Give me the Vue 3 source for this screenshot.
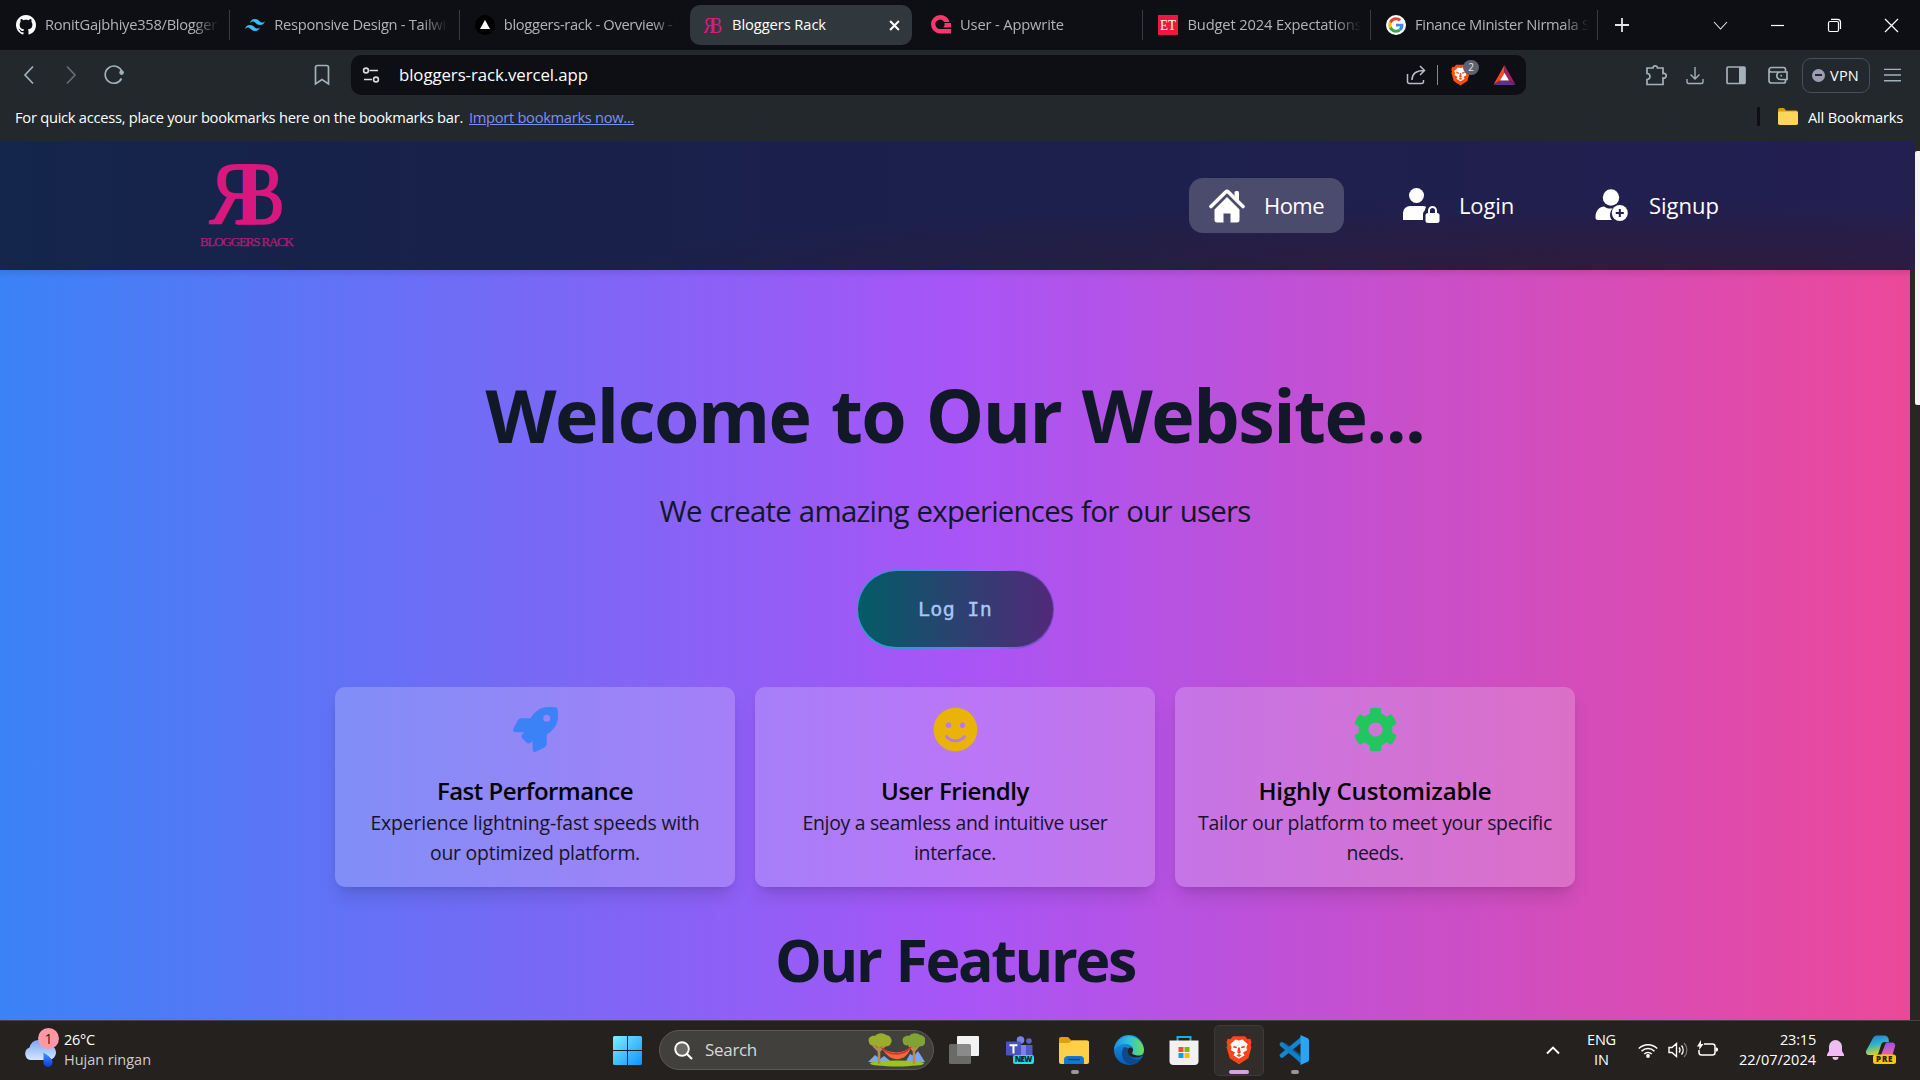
<script setup>
// Tunes letter spacing so a label fills the width it was designed for.
const vFit = {
  mounted(el, { value }) {
    const n = el.textContent.trim().length
    const w = el.getBoundingClientRect().width
    if (n > 1) el.style.letterSpacing = ((value - w) / n).toFixed(3) + 'px'
  }
}

const tabs = [
  { id: 'github', title: 'RonitGajbhiye358/Bloggers-Rack', w: 229.3, fit: 214, sep: true },
  { id: 'tailwind', title: 'Responsive Design - Tailwind CSS', w: 229.5, fit: 217, sep: true },
  { id: 'vercel', title: 'bloggers-rack - Overview - Vercel', w: 229.2, fit: 212 },
  { id: 'rb', title: 'Bloggers Rack', w: 227, fit: 94, active: true },
  { id: 'appwrite', title: 'User - Appwrite', w: 227.5, fit: 104, sep: true },
  { id: 'et', title: 'Budget 2024 Expectations Live', w: 227.5, fit: 204, sep: true },
  { id: 'google', title: 'Finance Minister Nirmala Sitharaman', w: 227.5, fit: 243, sep: true }
]

const cards = [
  {
    title: 'Fast Performance', tw: 196, color: '#3b82f6', vb: '0 0 512 512',
    lines: [['Experience lightning-fast speeds with', 329], ['our optimized platform.', 210]],
    d: 'M505.12 19.09c-1.19-5.53-6.66-11-12.21-12.19C460.72 0 435.51 0 410.41 0 307.18 0 245.27 55.2 199.05 128H94.84c-16.35.02-35.56 11.88-42.89 26.48L2.52 253.3A28.4 28.4 0 0 0 0 264a24 24 0 0 0 24 24h103.82l-22.48 22.47c-11.37 11.36-13 32.26 0 45.25l50.9 50.9c11.16 11.19 32.16 13.16 45.28 0L224 384.16V488a24 24 0 0 0 24 24 28.56 28.56 0 0 0 10.71-2.52l98.73-49.39c14.63-7.3 26.51-26.5 26.51-42.86V312.8c72.6-46.31 128.03-108.41 128.03-211.1.1-25.2.1-50.4-6.86-82.61zM384.04 168A40 40 0 1 1 424.05 128a40 40 0 0 1-40.01 40z'
  },
  {
    title: 'User Friendly', tw: 148, color: '#eab308', vb: '0 0 496 512',
    lines: [['Enjoy a seamless and intuitive user', 305], ['interface.', 82]],
    d: 'M248 8C111 8 0 119 0 256s111 248 248 248 248-111 248-248S385 8 248 8zm80 168c17.7 0 32 14.3 32 32s-14.3 32-32 32-32-14.3-32-32 14.3-32 32-32zm-160 0c17.7 0 32 14.3 32 32s-14.3 32-32 32-32-14.3-32-32 14.3-32 32-32zm194.8 170.2C334.3 380.4 292.5 400 248 400s-86.3-19.6-114.8-53.8c-13.6-16.3 11-36.7 24.6-20.5 22.4 26.9 55.2 42.2 90.2 42.2s67.8-15.4 90.2-42.2c13.4-16.2 38.1 4.2 24.6 20.5z'
  },
  {
    title: 'Highly Customizable', tw: 233, color: '#22c55e', vb: '0 0 512 512',
    lines: [['Tailor our platform to meet your specific', 354], ['needs.', 57]],
    d: 'M487.4 315.7l-42.6-24.6c4.3-23.2 4.3-47 0-70.2l42.6-24.6c4.9-2.8 7.1-8.6 5.5-14-11.1-35.6-30-67.8-54.7-94.6-3.8-4.1-10-5.1-14.8-2.3L380.8 110c-17.9-15.4-38.5-27.3-60.8-35.1V25.8c0-5.6-3.9-10.5-9.4-11.7-36.7-8.2-74.3-7.8-109.2 0-5.5 1.2-9.4 6.1-9.4 11.7V75c-22.2 7.9-42.8 19.8-60.8 35.1L88.7 85.5c-4.9-2.8-11-1.9-14.8 2.3-24.7 26.7-43.6 58.9-54.7 94.6-1.7 5.4.6 11.2 5.5 14L67.3 221c-4.3 23.2-4.3 47 0 70.2l-42.6 24.6c-4.9 2.8-7.1 8.6-5.5 14 11.1 35.6 30 67.8 54.7 94.6 3.8 4.1 10 5.1 14.8 2.3l42.6-24.6c17.9 15.4 38.5 27.3 60.8 35.1v49.2c0 5.6 3.9 10.5 9.4 11.7 36.7 8.2 74.3 7.8 109.2 0 5.5-1.2 9.4-6.1 9.4-11.7v-49.2c22.2-7.9 42.8-19.8 60.8-35.1l42.6 24.6c4.9 2.8 11 1.9 14.8-2.3 24.7-26.7 43.6-58.9 54.7-94.6 1.5-5.5-.7-11.3-5.6-14.1zM256 336c-44.1 0-80-35.9-80-80s35.9-80 80-80 80 35.9 80 80-35.9 80-80 80z'
  }
]
</script>

<template>
  <div class="screen">
    <!-- Browser tabs -->
    <header class="tabstrip">
      <div v-for="t in tabs" :key="t.id" class="tab" :class="{ active: t.active, sep: t.sep }" :style="{ width: t.w + 'px' }">
        <svg v-if="t.id === 'github'" class="fav" viewBox="0 0 16 16"><path fill="#fff" d="M8 0C3.58 0 0 3.58 0 8c0 3.54 2.29 6.53 5.47 7.59.4.07.55-.17.55-.38 0-.19-.01-.82-.01-1.49-2.01.37-2.53-.49-2.69-.94-.09-.23-.48-.94-.82-1.13-.28-.15-.68-.52-.01-.53.63-.01 1.08.58 1.23.82.72 1.21 1.87.87 2.33.66.07-.52.28-.87.51-1.07-1.78-.2-3.64-.89-3.64-3.95 0-.87.31-1.59.82-2.15-.08-.2-.36-1.02.08-2.12 0 0 .67-.21 2.2.82.64-.18 1.32-.27 2-.27.68 0 1.36.09 2 .27 1.53-1.04 2.2-.82 2.2-.82.44 1.1.16 1.92.08 2.12.51.56.82 1.27.82 2.15 0 3.07-1.87 3.75-3.65 3.95.29.25.54.73.54 1.48 0 1.07-.01 1.93-.01 2.2 0 .21.15.46.55.38A8.01 8.01 0 0 0 16 8c0-4.42-3.58-8-8-8z"/></svg>
        <svg v-else-if="t.id === 'tailwind'" class="fav" viewBox="0 0 24 24"><path fill="#38bdf8" d="M12 4.8c-3.2 0-5.2 1.6-6 4.8 1.2-1.6 2.6-2.2 4.2-1.8.913.228 1.565.89 2.288 1.624C13.666 10.618 15.027 12 18 12c3.2 0 5.2-1.6 6-4.8-1.2 1.6-2.6 2.2-4.2 1.8-.913-.228-1.565-.89-2.288-1.624C16.337 6.182 14.976 4.8 12 4.8zM6 12c-3.2 0-5.2 1.6-6 4.8 1.2-1.6 2.6-2.2 4.2-1.8.913.228 1.565.89 2.288 1.624C7.666 17.818 9.027 19.2 12 19.2c3.2 0 5.2-1.6 6-4.8-1.2 1.6-2.6 2.2-4.2 1.8-.913-.228-1.565-.89-2.288-1.624C10.337 13.382 8.976 12 6 12z"/></svg>
        <svg v-else-if="t.id === 'vercel'" class="fav" viewBox="0 0 20 20"><circle cx="10" cy="10" r="10" fill="#000"/><path d="M10 5l5 9H5z" fill="#fff"/></svg>
        <svg v-else-if="t.id === 'rb'" class="fav" viewBox="0 0 20 20"><g fill="#d81b84" font-family="Liberation Serif, serif" font-size="24"><text transform="translate(10.8 18) scale(-.72 1)">R</text><text transform="translate(6.4 18) scale(.72 1)">B</text></g></svg>
        <svg v-else-if="t.id === 'appwrite'" class="fav" viewBox="0 0 20 20"><path fill="#fd366e" d="M20 14v4.6H9.3A9.3 9.3 0 0 1 9.3 0c4.6 0 8.2 2.9 9.2 7h-5.3a4.7 4.7 0 1 0-3.7 7H20z"/><path fill="#fd366e" d="M13.5 8H20v4.6h-7.6a4.6 4.6 0 0 0 1.1-4.6z"/></svg>
        <svg v-else-if="t.id === 'et'" class="fav" viewBox="0 0 20 20"><path fill="#ed193b" d="M0 0h20v20H0z"/><text x="2" y="15" textLength="16" lengthAdjust="spacingAndGlyphs" fill="#fff" font-family="Liberation Serif, serif" font-size="15">ET</text></svg>
        <svg v-else class="fav" viewBox="-7 -7 62 62"><circle cx="24" cy="24" r="31" fill="#fff"/><path fill="#EA4335" d="M24 9.5c3.54 0 6.71 1.22 9.21 3.6l6.85-6.85C35.9 2.38 30.47 0 24 0 14.62 0 6.51 5.38 2.56 13.22l7.98 6.19C12.43 13.72 17.74 9.5 24 9.5z"/><path fill="#4285F4" d="M46.98 24.55c0-1.57-.15-3.09-.38-4.55H24v9.02h12.94c-.58 2.96-2.26 5.48-4.78 7.18l7.73 6c4.51-4.18 7.09-10.36 7.09-17.65z"/><path fill="#FBBC05" d="M10.53 28.59c-.48-1.45-.76-2.99-.76-4.59s.27-3.14.76-4.59l-7.98-6.19C.92 16.46 0 20.12 0 24s.92 7.54 2.56 10.78l7.97-6.19z"/><path fill="#34A853" d="M24 48c6.48 0 11.93-2.13 15.89-5.81l-7.73-6c-2.15 1.45-4.92 2.3-8.16 2.3-6.26 0-11.57-4.22-13.47-9.91l-7.98 6.19C6.51 42.62 14.62 48 24 48z"/></svg>
        <div class="tabtitle"><span v-fit="t.fit">{{ t.title }}</span></div>
        <svg v-if="t.active" class="close" viewBox="0 0 10 10"><path d="M1 1l8 8M9 1L1 9" stroke="#fff" stroke-width="1.9"/></svg>
      </div>
      <svg class="plus" viewBox="0 0 14 14"><path d="M7 0v14M0 7h14" stroke="#e4e5e8" stroke-width="1.8"/></svg>
      <div class="winctl">
        <svg viewBox="0 0 15 15"><path d="M1 4l6.500 7L14 4" stroke="#e8e8e8" fill="none" stroke-width="1.1"/></svg>
        <svg viewBox="0 0 15 15"><path d="M1 7.500h13" stroke="#fff" stroke-width="1.2"/></svg>
        <svg viewBox="0 0 15 15"><rect x="1.500" y="3.500" width="10" height="10" rx="1.5" fill="none" stroke="#fff" stroke-width="1.2"/><path d="M4 1.300h6.500a3 3 0 0 1 3 3V11" fill="none" stroke="#fff" stroke-width="1.2"/></svg>
        <svg viewBox="0 0 15 15"><path d="M1 1l13 13M14 1L1 14" stroke="#fff" stroke-width="1.2"/></svg>
      </div>
    </header>

    <!-- Address bar -->
    <div class="toolbar">
      <svg class="i22 back" viewBox="0 0 22 22"><path d="M15 2.5L7 11l8 8.500" class="ln"/></svg>
      <svg class="i22 fwd" viewBox="0 0 22 22"><path d="M7 2.5l8 8.5-8 8.500" class="ln"/></svg>
      <svg class="i22 reload" viewBox="0 0 22 22"><path d="M18.5 14.5A8.600 8.600 0 1 1 19 8" class="ln"/><circle cx="18.6" cy="8.6" r="2.3" fill="#a3b2b8"/></svg>
      <svg class="i22 mark" viewBox="0 0 22 22"><path d="M4.5 3.5a2 2 0 0 1 2-2h9a2 2 0 0 1 2 2v16.500L11 15.500 4.500 20z" class="ln"/></svg>
      <div class="url">
        <svg class="site" viewBox="0 0 18 18"><g fill="none" stroke="#d8dce0" stroke-width="1.6"><circle cx="4" cy="4.5" r="2.4"/><path d="M7.5 4.5H16M2 13.5h8"/><circle cx="14" cy="13.5" r="2.4"/></g></svg>
        <span v-fit="189" class="addr">bloggers-rack.vercel.app</span>
        <svg class="share" viewBox="0 0 20 20"><path d="M1.5 9v7.500a2 2 0 0 0 2 2h12a2 2 0 0 0 2-2V15M6 15c0-6 4-9.500 12-9.500M14 1l4.500 4.500L14 10" fill="none" stroke="#b9bcc2" stroke-width="1.5"/></svg>
        <i class="bar"></i>
        <div class="shield">
          <svg viewBox="0 0 30 34"><path fill="#ff4d0c" d="M8 1h14l3 3.500 3-.5 1.500 4-1 3 .8 3-3.500 12.500L15 33.500 4.200 26.500.7 14l.8-3-1-3L2 4l3 .5z"/><path fill="#fff" d="M15 6l4-1 6 5.500-1.500 4 1 2.500-5 3 2 3L15 27l-6.500-4 2-3-5-3 1-2.500L5 10.500 11 5z"/><path fill="#ff4d0c" d="M9 12l4 1.500L12 15l-4-1zM21 12l-4 1.500 1 1.500 4-1zM14 14h2l1 6-2 1.500-2-1.500zM12 23l3-1.500 3 1.500-3 2z"/></svg>
          <b>2</b>
        </div>
        <svg class="bat" viewBox="0 0 24 22"><path fill="#ff4724" d="M12 0L0 21.500 7 17l5-8.500z"/><path fill="#9e1f63" d="M12 0l12 21.500L17 17 12 8.500z"/><path fill="#662d91" d="M0 22h24l-7-5H7z"/><path fill="#fff" d="M12 8.500L7 17h10z"/></svg>
      </div>
      <svg class="i22 ext" viewBox="0 0 22 22"><path d="M2 4h6a2.200 2.200 0 1 1 4.400 0H18v5.500a2.400 2.400 0 1 1 0 4.500v6.500H2v-5a3 3 0 0 0 0-6z" class="ln"/></svg>
      <svg class="i22 dl" viewBox="0 0 22 22"><path d="M11 3v12M6.500 10.500L11 15l4.500-4.500M3 15v3a1.500 1.500 0 0 0 1.500 1.500h13A1.500 1.500 0 0 0 19 18v-3" class="ln thin"/></svg>
      <svg class="i22 sb" viewBox="0 0 22 22"><rect x="2" y="3" width="18" height="16.5" rx="1" class="ln"/><path d="M14 3h6v16.500h-6z" fill="#a3b2b8"/></svg>
      <svg class="i22 wl" viewBox="0 0 22 22"><path d="M18.500 8V5.500a2 2 0 0 0-2-2h-12A2.500 2.500 0 0 0 2 6v10.500a2.500 2.500 0 0 0 2.500 2.500h12a2 2 0 0 0 2-2V15.500M2 6c0 1.500 1.500 2 2.500 2H20v7.500h-6.500a3.700 3.700 0 0 1 0-7.500M13.500 11.700h1.500" class="ln"/></svg>
      <div class="vpn"><i></i><span v-fit="29">VPN</span></div>
      <svg class="burger" viewBox="0 0 18 14"><path d="M0 1h18M0 7h18M0 13h18" stroke="#a3b2b8" stroke-width="1.5"/></svg>
    </div>

    <!-- Bookmarks bar -->
    <div class="bookmarks">
      <span v-fit="448">For quick access, place your bookmarks here on the bookmarks bar.</span>
      <a v-fit="165">Import bookmarks now...</a>
      <i></i>
      <svg viewBox="0 0 20 17"><path d="M0 2a2 2 0 0 1 2-2h4l2 2.500h10a2 2 0 0 1 2 2V8H0z" fill="#d99b0b"/><rect y="3.5" width="20" height="13.5" rx="1.8" fill="#ffd65c"/></svg>
      <span v-fit="95">All Bookmarks</span>
    </div>

    <!-- Page -->
    <main class="page">
      <nav class="nav">
        <svg class="logo" viewBox="0 0 110 100">
          <g fill="#d9187f" stroke="#d9187f" stroke-width="1.6" font-family="Liberation Serif, serif" font-size="88">
            <text transform="translate(66.500 69.500) scale(-.84 1)">R</text>
            <text transform="translate(43.500 69.500) scale(.84 1)">B</text>
            <path d="M51 12h13v56H51z" stroke="none"/>
          </g>
          <text x="8" y="93" textLength="94" fill="#b31d76" stroke="#b31d76" stroke-width=".25" font-family="Liberation Serif, serif" font-size="13">BLOGGERS RACK</text>
        </svg>
        <div class="links">
          <a class="on">
            <svg class="home" viewBox="0 0 36 34"><path fill="#fff" d="M18 8L5.500 20.500V31a2.500 2.500 0 0 0 2.500 2.500h6.500V24.500h7V33.500H28a2.500 2.500 0 0 0 2.500-2.500V20.500z"/><path d="M2 17.500L16.700 3a1.900 1.900 0 0 1 2.600 0L34 17.500" fill="none" stroke="#fff" stroke-width="3.600" stroke-linecap="round"/><path fill="#fff" d="M25.500 3.500a1.500 1.500 0 0 1 1.500-1.500h1.500A1.500 1.500 0 0 1 30 3.500V12l-4.500-4z"/></svg>
            <span v-fit="60">Home</span>
          </a>
          <a class="lg">
            <svg class="ico" viewBox="0 0 37 35"><circle cx="13.500" cy="7.500" r="7.500" fill="#fff"/><path fill="#fff" d="M0 32v-7a7 7 0 0 1 7-7h13a6 6 0 0 1 3 .8L21.500 23a4 4 0 0 0-1.500 3v6z"/><path fill="#fff" d="M25 25h9a2.500 2.500 0 0 1 2.500 2.500v5A2.500 2.500 0 0 1 34 35h-9a2.500 2.500 0 0 1-2.500-2.500v-5A2.500 2.500 0 0 1 25 25z"/><path d="M26 26v-3.500a3.500 3.500 0 0 1 7 0V26" fill="none" stroke="#fff" stroke-width="2"/></svg>
            <span v-fit="55">Login</span>
          </a>
          <a class="su">
            <svg class="ico2" viewBox="0 0 33 33"><circle cx="16" cy="8.500" r="8.200" fill="#fff"/><path fill="#fff" d="M3 31a2.500 2.500 0 0 1-2.500-2.500C.5 21 5 17.500 9 17.500c4 2.500 7 2.500 9 1.500-4 4-3.500 9.500-1 12z"/><circle cx="24.800" cy="24" r="8" fill="#fff"/><path d="M24.800 20v8M20.800 24h8" stroke="#211d4d" stroke-width="2"/></svg>
            <span v-fit="70">Signup</span>
          </a>
        </div>
      </nav>
      <section class="hero">
        <h1><span v-fit="939">Welcome to Our Website...</span></h1>
        <p class="lead"><span v-fit="591">We create amazing experiences for our users</span></p>
        <button class="login"><span v-fit="74">Log In</span></button>
        <div class="cards">
          <article v-for="c in cards" :key="c.title" class="card">
            <svg :viewBox="c.vb"><path :fill="c.color" :d="c.d"/></svg>
            <h3><span v-fit="c.tw">{{ c.title }}</span></h3>
            <p v-for="l in c.lines" :key="l[0]"><span v-fit="l[1]">{{ l[0] }}</span></p>
          </article>
        </div>
        <h2><span v-fit="360">Our Features</span></h2>
      </section>
      <div class="scroll"></div>
    </main>

    <!-- Taskbar -->
    <footer class="task">
      <div class="weather">
        <svg viewBox="0 0 32 40">
          <defs><linearGradient id="cl" x2="0" y2="1"><stop stop-color="#7aa7f2"/><stop offset="1" stop-color="#d5e4ff"/></linearGradient><linearGradient id="dr" x2="0" y2="1"><stop stop-color="#3b9bff"/><stop offset="1" stop-color="#1436d8"/></linearGradient></defs>
          <path fill="url(#cl)" d="M6.500 30a6.500 6.500 0 0 1-1-12.500A10 10 0 0 1 24 15a7.500 7.500 0 0 1 1 15z"/>
          <path fill="url(#dr)" d="M19.500 22.500c6 4 9 6.500 9 10a4.500 4.500 0 0 1-9 0z"/>
        </svg>
        <b>1</b>
        <div class="wt"><span v-fit="31">26°C</span><span v-fit="87" class="sub">Hujan ringan</span></div>
      </div>

      <svg class="win" viewBox="0 0 29 29"><defs><linearGradient id="wg" x2="1" y2="1"><stop stop-color="#7cf0ff"/><stop offset="1" stop-color="#0f92ff"/></linearGradient></defs><path fill="url(#wg)" d="M0 1.500Q0 0 1.500 0H14v14H0zM15 0h12.500Q29 0 29 1.500V14H15zM0 15h14v14H1.500Q0 29 0 27.500zM15 15h14v12.500q0 1.500-1.500 1.500H15z"/></svg>
      <div class="search">
        <svg class="mag" viewBox="0 0 19 19"><circle cx="8" cy="8" r="6.800" fill="#6b6966" stroke="#fff" stroke-width="1.9"/><path d="M12.500 12.500l5.500 5.500" stroke="#fff" stroke-width="2.2"/></svg>
        <span v-fit="52">Search</span>
        <svg class="art" viewBox="0 0 57 34">
          <path fill="#7da6ee" d="M0 29l7-7 5 4 4-3 9 7zM37 30l5-9 4 2 4-5 7 11z"/>
          <ellipse cx="29" cy="30.500" rx="27" ry="3" fill="#9cc51c"/>
          <path d="M11 12v19M46 12v19M11 18l-6-6M11 18l6-6M46 18l-5-6M46 18l5-6" stroke="#b98a4e" stroke-width="2.600"/>
          <path fill="#9aad2c" d="M1 9c-2-4 3-7 6-6 3-4 9-3 11-1 4 0 7 5 5 8-1 4-6 4-8 3-3 2-7 1-8-1-3 1-6 0-6-3z"/>
          <path fill="#7fa433" d="M35 9c-2-4 3-7 6-6 3-4 9-3 11-1 4 0 7 5 5 8-1 4-6 4-8 3-3 2-7 1-8-1-3 1-6 0-6-3z"/>
          <path fill="#f4683b" d="M14 15c8 6 22 6 29-1-4 15-21 17-29 1z"/><path d="M14 15c7 8 22 8 29-1" fill="none" stroke="#d3342b" stroke-width="1.600"/>
        </svg>
      </div>
      <div class="apps">
        <div><svg width="30" height="28" viewBox="0 0 30 28"><rect x="8" width="22" height="20" rx="1" fill="#f3f3f3"/><rect y="8" width="22" height="20" rx="1.500" fill="#777" opacity=".85"/></svg></div>
        <div class="teams"><svg width="30" height="28" viewBox="0 0 30 28"><circle cx="15.500" cy="4" r="3.800" fill="#7b83eb"/><circle cx="24" cy="5" r="2.800" fill="#5b62c9"/><path fill="#7b83eb" d="M12 9h9v14h-9z"/><path fill="#5059c9" d="M21 9h6.500v11H21z"/><rect x="1" y="5.500" width="15" height="14" rx="1" fill="#4b53bc"/><path d="M4.500 9.200h8M8.500 9v8.500" stroke="#fff" stroke-width="2"/><rect x="8" y="19" width="21" height="9" rx="2" fill="#22dfe0"/><text x="9.800" y="26.300" textLength="17.500" font-family="Open Sans, sans-serif" font-weight="800" font-size="7.800" fill="#06272a">NEW</text></svg></div>
        <div class="dot"><svg width="30" height="27" viewBox="0 0 30 27"><path fill="#e0a008" d="M0 2a2 2 0 0 1 2-2h7l3.500 3.500H28a2 2 0 0 1 2 2V12H0z"/><path fill="#ffcf48" d="M0 6h10l3-2.500h15a2 2 0 0 1 2 2V25a2 2 0 0 1-2 2H2a2 2 0 0 1-2-2z"/><path fill="#0f78d4" d="M5 27v-4a4 4 0 0 1 4-4h12a4 4 0 0 1 4 4v4z"/><path d="M9 22.500h12" stroke="#0a4a8a" stroke-width="1.500"/></svg></div>
        <div><svg width="30" height="30" viewBox="0 0 30 30"><defs><linearGradient id="e1"><stop stop-color="#1b8fe0"/><stop offset=".5" stop-color="#2fc2df"/><stop offset="1" stop-color="#6be04c"/></linearGradient><linearGradient id="e2" x2="0" y2="1"><stop stop-color="#1b9de2"/><stop offset="1" stop-color="#0a5ab8"/></linearGradient></defs><circle cx="15" cy="15" r="15" fill="url(#e2)"/><path fill="#0c4a8c" d="M10 12c-5 8 0 17 8 17.700 4 0 8-3 9.500-6.700-4 2.500-11 1.500-12-4-.4-3 1-4.500 1.500-5z"/><path fill="url(#e1)" d="M1.500 10A15 15 0 0 1 30 14.500c0 5-4 7-8 6.500-3-.3-4.500-1.800-3.500-3.500C21 13 17 9 12 9c-4.500 0-8 1.500-12 6 0-2 .5-3.500 1.500-5z"/><path fill="#24211e" d="M18 18.500c-.8-.5 1.200-1.700.8-4.300-1-2.200-3.300-2-4.600 0-1.500 3 .8 7.300 5.800 8.300 4 .5 8-.5 9.800-3.300C27 21.300 21 21 18 18.500z"/></svg></div>
        <div><svg width="30" height="30" viewBox="0 0 30 30"><path d="M8.500 8V2h13v6" fill="none" stroke="#26a7e8" stroke-width="2"/><path fill="#f1f1f1" d="M.5 5.500h29V26a4 4 0 0 1-4 4h-21a4 4 0 0 1-4-4z"/><path fill="#f25022" d="M9.500 12h5v5h-5z"/><path fill="#7fba00" d="M15.500 12h5v5h-5z"/><path fill="#00a4ef" d="M9.500 18h5v5h-5z"/><path fill="#ffb900" d="M15.500 18h5v5h-5z"/></svg></div>
        <div class="open"><svg width="26" height="30" viewBox="0 0 30 34"><path fill="#ff4518" d="M8 1h14l3 3.500 3-.5 1.500 4-1 3 .8 3-3.500 12.500L15 33.500 4.200 26.500.7 14l.8-3-1-3L2 4l3 .5z"/><path fill="#fff" d="M15 6l4-1 6 5.500-1.500 4 1 2.500-5 3 2 3L15 27l-6.500-4 2-3-5-3 1-2.500L5 10.500 11 5z"/><path fill="#ff4518" d="M9 12l4 1.500L12 15l-4-1zM21 12l-4 1.500 1 1.500 4-1zM14 14h2l1 6-2 1.500-2-1.500zM12 23l3-1.500 3 1.500-3 2z"/></svg></div>
        <div class="dot"><svg width="30" height="30" viewBox="0 0 30 30"><path d="M3 9.500L22.500 25.500M3 20.500L22.500 4.500" stroke="#1186d2" stroke-width="4.600" stroke-linecap="round"/><path fill="#2ba5f2" d="M21.500 0l7.200 3.200A2.500 2.500 0 0 1 30 5.500v19a2.500 2.500 0 0 1-1.300 2.300L21.500 30z"/><path fill="#0f76bd" d="M3 9.500l3-2 16 12v10z" opacity=".5"/></svg></div>
      </div>
      <div class="tray">
        <svg class="chev" viewBox="0 0 14 9"><path d="M1 7.500l6-6 6 6" fill="none" stroke="#fff" stroke-width="1.900"/></svg>
        <div class="lang"><span v-fit="29">ENG</span><span v-fit="15">IN</span></div>
        <svg class="wifi" viewBox="0 0 20 15"><g fill="none" stroke="#fff" stroke-width="1.500"><path d="M.8 5.500a13 13 0 0 1 18.400 0M3.500 8.300a9.200 9.200 0 0 1 13 0M6.300 11a5.200 5.200 0 0 1 7.400 0"/></g><circle cx="10" cy="13" r="1.900" fill="#fff"/></svg>
        <svg class="vol" viewBox="0 0 20 16"><path d="M1 5.500h3L8.500 1.500v13L4 10.500H1zM11 5.500a4 4 0 0 1 0 5M13.500 3.500a7 7 0 0 1 0 9" fill="none" stroke="#fff" stroke-width="1.400"/><path d="M16 1a10 10 0 0 1 0 14" fill="none" stroke="#777" stroke-width="1.300"/></svg>
        <svg class="batt" viewBox="0 0 21 17"><path d="M7 4h8.500A2.500 2.500 0 0 1 18 6.500v6a2.500 2.500 0 0 1-2.500 2.500h-11A2.500 2.500 0 0 1 2 12.500V10" fill="none" stroke="#fff" stroke-width="1.500"/><path fill="#fff" d="M18.500 7.500h1a1.500 1.500 0 0 1 1.500 1.500v1a1.500 1.500 0 0 1-1.500 1.500h-1zM4 0L0 6.500h2.500L2 10l4.500-6H4z"/></svg>
        <div class="clock"><span v-fit="36">23:15</span><span v-fit="77">22/07/2024</span></div>
        <svg class="bell" viewBox="0 0 17 20"><path fill="#efbdf3" d="M8.500 0a6.500 6.500 0 0 1 6.500 6.500V11l2 3.500V16H0v-1.500L2 11V6.500A6.500 6.500 0 0 1 8.500 0zM5.500 17h6a3 3 0 0 1-6 0z"/></svg>
        <svg class="cop" viewBox="0 0 30 30"><defs><linearGradient id="c1" x2=".3" y2="1"><stop stop-color="#2a6fe0"/><stop offset=".5" stop-color="#29b4c8"/><stop offset="1" stop-color="#d5d02d"/></linearGradient><linearGradient id="c2" x2="0" y2="1"><stop stop-color="#9a52e8"/><stop offset="1" stop-color="#f9689a"/></linearGradient></defs><path fill="url(#c1)" d="M7 3a4 4 0 0 1 4-2.500h8a4 4 0 0 1 3.500 3L23 7h-4a4 4 0 0 0-4 3l-2.500 8a3 3 0 0 1-3 2H3a3 3 0 0 1-3-4z"/><path fill="url(#c2)" d="M20 7.500h6a3 3 0 0 1 3 4L26.500 20a4 4 0 0 1-4 2.500H14z"/><rect x="7" y="19.500" width="23" height="9.500" rx="2.500" fill="#fdc60b"/><text x="10" y="27.300" textLength="16.500" font-family="Open Sans, sans-serif" font-weight="800" font-size="8" fill="#2a2100">PRE</text></svg>
      </div>
    </footer>
  </div>
</template>

<style>
html, body { margin: 0; overflow: hidden; }
</style>

<style scoped>
* { box-sizing: border-box; }
.screen { width: 1920px; height: 1080px; display: flex; flex-direction: column; overflow: hidden; background: #22282b; color: #fff; font-family: "Open Sans", "Noto Sans", sans-serif; }
.screen span { display: inline-block; white-space: nowrap; }
svg { flex: none; display: block; }

.tabstrip { height: 50px; flex: none; background: #0e0f14; display: flex; align-items: center; padding-left: 1px; }
.tab { flex: none; height: 40px; display: flex; align-items: center; padding-left: 15px; position: relative; }
.tab.sep::after { content: ""; position: absolute; right: 0; top: 5px; width: 1px; height: 30px; background: #3a3b40; }
.tab.active::before { content: ""; position: absolute; left: 1px; right: 4px; top: 0; bottom: 0; border-radius: 10px; background: #30383d; }
.fav { width: 20px; height: 20px; position: relative; }
.tabtitle { width: 174px; margin-left: 9px; margin-top: -2px; overflow: hidden; font-size: 14.7px; line-height: 24px; color: #b2b3b8; position: relative; -webkit-mask-image: linear-gradient(90deg, #000 148px, transparent 174px); mask-image: linear-gradient(90deg, #000 148px, transparent 174px); }
.active .tabtitle { color: #fff; width: 120px; margin-left: 8px; -webkit-mask-image: none; mask-image: none; }
.close { width: 11px; height: 11px; margin-left: 37px; position: relative; }
.plus { width: 14px; height: 14px; margin-left: 17px; }
.winctl { display: flex; gap: 42px; margin-left: 83.5px; }
.winctl svg { width: 15px; height: 15px; }

.toolbar { height: 50px; flex: none; display: flex; align-items: center; }
.ln { fill: none; stroke: #a3b2b8; stroke-width: 1.7; }
.thin { stroke-width: 1.4; }
.i22 { width: 22px; height: 22px; }
.back { margin-left: 18px; }
.fwd { margin-left: 20px; opacity: .5; }
.reload { margin-left: 21px; }
.mark { margin-left: 186px; }
.url { width: 1175px; height: 40px; margin-left: 18px; background: #0e0f14; border-radius: 10px; display: flex; align-items: center; flex: none; }
.site { width: 18px; height: 18px; margin-left: 11px; }
.addr { margin-left: 19px; font-size: 16.8px; line-height: 30px; }
.share { width: 20px; height: 20px; margin-left: auto; }
.bar { width: 1.5px; height: 20px; background: #85878c; margin: 0 13px 0 11px; }
.shield { position: relative; width: 20px; height: 22px; margin-right: 22px; }
.shield svg { width: 19px; height: 22px; }
.shield b { position: absolute; left: 12px; top: -4px; width: 16px; height: 15px; border-radius: 8px; background: #5d6170; color: #e8e8ee; font-size: 10px; line-height: 15px; text-align: center; font-weight: 400; }
.bat { width: 23px; height: 20px; margin-right: 10px; }
.ext { margin-left: 119px; }
.dl { margin-left: 17px; }
.sb { margin-left: 19px; }
.wl { margin-left: 20px; }
.vpn { width: 68px; height: 35px; margin-left: 13px; border: 1px solid #465055; border-radius: 9px; display: flex; align-items: center; padding-left: 9px; gap: 5px; font-size: 14.5px; }
.vpn i { width: 13px; height: 13px; border-radius: 50%; background: linear-gradient(#24282b, #24282b) center / 7px 2px no-repeat #9d9cb4; }
.burger { width: 17px; height: 14px; margin-left: 14px; }

.bookmarks { height: 41px; flex: none; display: flex; align-items: center; padding: 0 17px 8px 15px; font-size: 14.7px; line-height: 24px; }
.bookmarks a { margin-left: 6px; color: #7c8ff8; text-decoration: underline; white-space: nowrap; }
.bookmarks i { margin-left: auto; width: 3px; height: 19px; background: #0e0f14; border-radius: 1px; }
.bookmarks svg { width: 20px; height: 17px; margin: 0 10px 0 18px; }

.page { height: 879px; flex: none; position: relative; background: #2a2624; }
.nav { width: 1915px; height: 129px; position: relative; display: flex; align-items: center; background: radial-gradient(ellipse 1000px 70px at 1600px 130px, rgba(48, 27, 57, .85), transparent), linear-gradient(90deg, #14264b 0, #17224a 300px, #1c204c 1000px, #231f50 100%); }
.logo { width: 110px; height: 100px; margin-left: 191.5px; margin-top: -6px; }
.links { display: flex; align-items: center; margin-left: auto; padding-right: 176px; font-size: 22px; line-height: 55px; }
.links a { height: 55px; display: flex; align-items: center; padding: 0 20px; border-radius: 14px; }
.links .on { background: #4b4b6e; width: 155px; }
.home { width: 36px; height: 34px; margin-right: 19px; }
.lg { margin-left: 39px; }
.ico { width: 37px; height: 35px; margin-right: 19px; }
.su { margin-left: 41px; }
.ico2 { width: 33px; height: 33px; margin-right: 21px; }

.hero { width: 1910px; height: 750px; overflow: hidden; padding-top: 107px; display: flex; flex-direction: column; align-items: center; text-align: center; background: linear-gradient(rgba(0, 0, 0, .09), transparent 8px), linear-gradient(90deg, #3b82f6, #a855f7, #ec4899); color: #111827; }
h1, h2, h3, p { margin: 0; }
h1 { font-size: 73.5px; line-height: 75px; font-weight: 700; word-spacing: 3px; }
.lead { margin-top: 37px; font-size: 29.4px; line-height: 45px; word-spacing: 1px; }
.login { margin-top: 35.5px; width: 197px; height: 79px; flex: none; border: 1px solid transparent; border-bottom-width: 2px; border-radius: 39.5px; background: linear-gradient(90deg, #035b66, #52297a) padding-box, linear-gradient(90deg, #14a9c4, #8a6cf0 70%, #7040b8) border-box; color: #a9c8f5; -webkit-text-stroke: .35px #a9c8f5; font: 20px/40px "DejaVu Sans Mono", monospace; padding: 0; }
.cards { margin-top: 38.5px; display: flex; gap: 20px; }
.card { width: 400px; height: 200px; border-radius: 10px; background: rgba(255, 255, 255, .2); padding-top: 20px; display: flex; flex-direction: column; align-items: center; color: #000; position: relative; }
.card::before { content: ""; position: absolute; inset: 0; border-radius: 10px; box-shadow: 0 12px 19px -4px rgba(0, 0, 0, .13), 0 5px 8px -5px rgba(0, 0, 0, .13); clip-path: polygon(-30px -30px, 430px -30px, 430px 240px, -30px 240px, -30px 192px, 0 192px, 8px 200px, 392px 200px, 400px 192px, 400px 8px, 392px 0, 8px 0, 0 8px, 0 192px, -30px 192px); }
.card svg { width: 45px; height: 45px; }
.card h3 { margin-top: 21px; font-size: 24px; line-height: 35px; font-weight: 600; }
.card p { font-size: 19.4px; line-height: 30px; color: #17132c; }
h2 { margin-top: 42px; font-size: 59px; line-height: 60px; font-weight: 700; word-spacing: 2px; }
.scroll { position: absolute; right: 0; top: 10px; width: 5px; height: 254px; background: #f4f4f4; border-radius: 2px 0 0 2px; }

.task { height: 60px; flex: none; background: #24211e; border-top: 1px solid #464442; display: flex; align-items: center; padding-bottom: 1px; font-size: 14.5px; line-height: 20px; }
.weather { width: 588px; flex: none; display: flex; align-items: center; padding-left: 24px; position: relative; }
.weather svg { width: 32px; height: 40px; }
.weather b { position: absolute; left: 38px; top: -2px; width: 21px; height: 21px; border-radius: 50%; background: #ff98a5; color: #24211e; font-size: 14px; line-height: 21px; text-align: center; font-weight: 400; }
.wt { display: flex; flex-direction: column; align-items: flex-start; margin-left: 8px; margin-top: -1px; }
.sub { color: #cfcdcb; }
.win { width: 29px; height: 29px; margin-left: 25px; }
.search { width: 275px; height: 40px; flex: none; margin-left: 17px; border-radius: 20px; background: #42403d; border: 1px solid #5b5957; display: flex; align-items: center; font-size: 17px; color: #d9d8d7; }
.mag { width: 19px; height: 19px; margin: 0 12px 0 14px; }
.art { width: 57px; height: 34px; margin-left: auto; margin-right: 8px; }
.apps { display: flex; margin-left: 2.5px; }
.apps > div { width: 55px; height: 59px; display: flex; align-items: center; justify-content: center; position: relative; }
.apps svg { position: relative; }
.teams { padding-left: 2px; }
.dot::after, .open::after { content: ""; position: absolute; bottom: 6px; left: 24px; width: 8px; height: 4px; border-radius: 2px; background: #9a9896; }
.open::after { left: 17px; width: 20px; background: #d9a0e4; }
.open::before { content: ""; position: absolute; inset: 4px 2.5px; border-radius: 5px; background: #302d2a; border: 1px solid #3d3a37; }
.tray { margin-left: auto; display: flex; align-items: center; padding-right: 24px; }
.chev { width: 14px; height: 9px; margin-right: 27px; }
.lang { width: 29px; display: flex; flex-direction: column; align-items: center; margin-right: 22px; }
.wifi { width: 20px; height: 15px; margin-right: 10px; }
.vol { width: 20px; height: 16px; margin-right: 9px; }
.batt { width: 21px; height: 17px; margin-right: 20px; margin-top: -3px; }
.clock { width: 78px; display: flex; flex-direction: column; align-items: flex-end; margin-right: 11px; margin-top: -1px; }
.bell { width: 17px; height: 20px; margin-right: 22px; }
.cop { width: 30px; height: 30px; }
</style>
